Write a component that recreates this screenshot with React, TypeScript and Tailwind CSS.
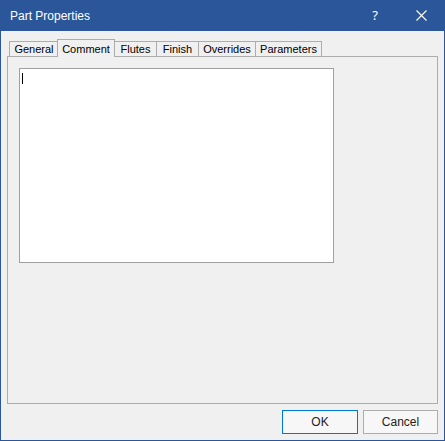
import React from "react";

const tabs = ["General", "Comment", "Flutes", "Finish", "Overrides", "Parameters"];

const tabWidths: Record<string, string> = {
  General: "w-[49px]",
  Comment: "w-[58px]",
  Flutes: "w-[42px]",
  Finish: "w-[42px]",
  Overrides: "w-[57px]",
  Parameters: "w-[67px]",
};

export default function App() {
  return (
    <div className="w-[445px] h-[441px] bg-[#2b579a] px-px pb-px flex flex-col font-['Liberation_Sans',Arial,sans-serif]">
      {/* title bar */}
      <div className="h-[31px] flex items-center text-white shrink-0">
        <span className="pl-[9px] text-[12px] leading-none">Part Properties</span>
        <span className="ml-auto mr-[38px] text-[13px] font-['Noto_Sans',sans-serif] leading-none">?</span>
        <svg width="11" height="11" viewBox="0 0 11 11" className="mr-[17px]">
          <path d="M0.5 0.5 L10.5 10.5 M10.5 0.5 L0.5 10.5" stroke="white" strokeWidth="1.1" />
        </svg>
      </div>

      {/* body */}
      <div className="flex-1 bg-[#f0f0f0] flex flex-col px-[6px] pt-[9px]">
        {/* tab strip */}
        <div className="flex items-end h-[16px] ml-[2px] relative z-10 text-[11px] text-black">
          {tabs.map((name, i) => {
            if (name === "Comment") {
              return (
                <div
                  key={name}
                  className={`${tabWidths[name]} h-[18px] -mb-px -mx-px border border-b-0 border-[#adadad] bg-[#f0f0f0] flex items-center justify-center pt-[2px]`}
                >
                  {name}
                </div>
              );
            }
            return (
              <div
                key={name}
                className={`${tabWidths[name]} h-[15px] border-t border-l border-[#adadad] ${
                  i === tabs.length - 1 ? "border-r" : ""
                } bg-[#f0f0f0] flex items-center justify-center leading-none`}
              >
                {name}
              </div>
            );
          })}
        </div>

        {/* panel */}
        <div className="h-[348px] border border-[#adadad] pl-[11px] pt-[11px]">
          <div className="w-[315px] h-[195px] bg-white border border-[#a0a0a0] pl-[2px] pt-[4px]">
            <div className="w-px h-[11px] bg-black" />
          </div>
        </div>

        {/* buttons */}
        <div className="flex justify-end gap-[5px] mt-[6px] text-[12px] text-[#222]">
          <button className="w-[76px] h-[24px] border border-[#0078d7] bg-[#f7f7f7] flex items-center justify-center">
            OK
          </button>
          <button className="w-[75px] h-[24px] border border-[#adadad] bg-[#f7f7f7] flex items-center justify-center">
            Cancel
          </button>
        </div>
      </div>
    </div>
  );
}
